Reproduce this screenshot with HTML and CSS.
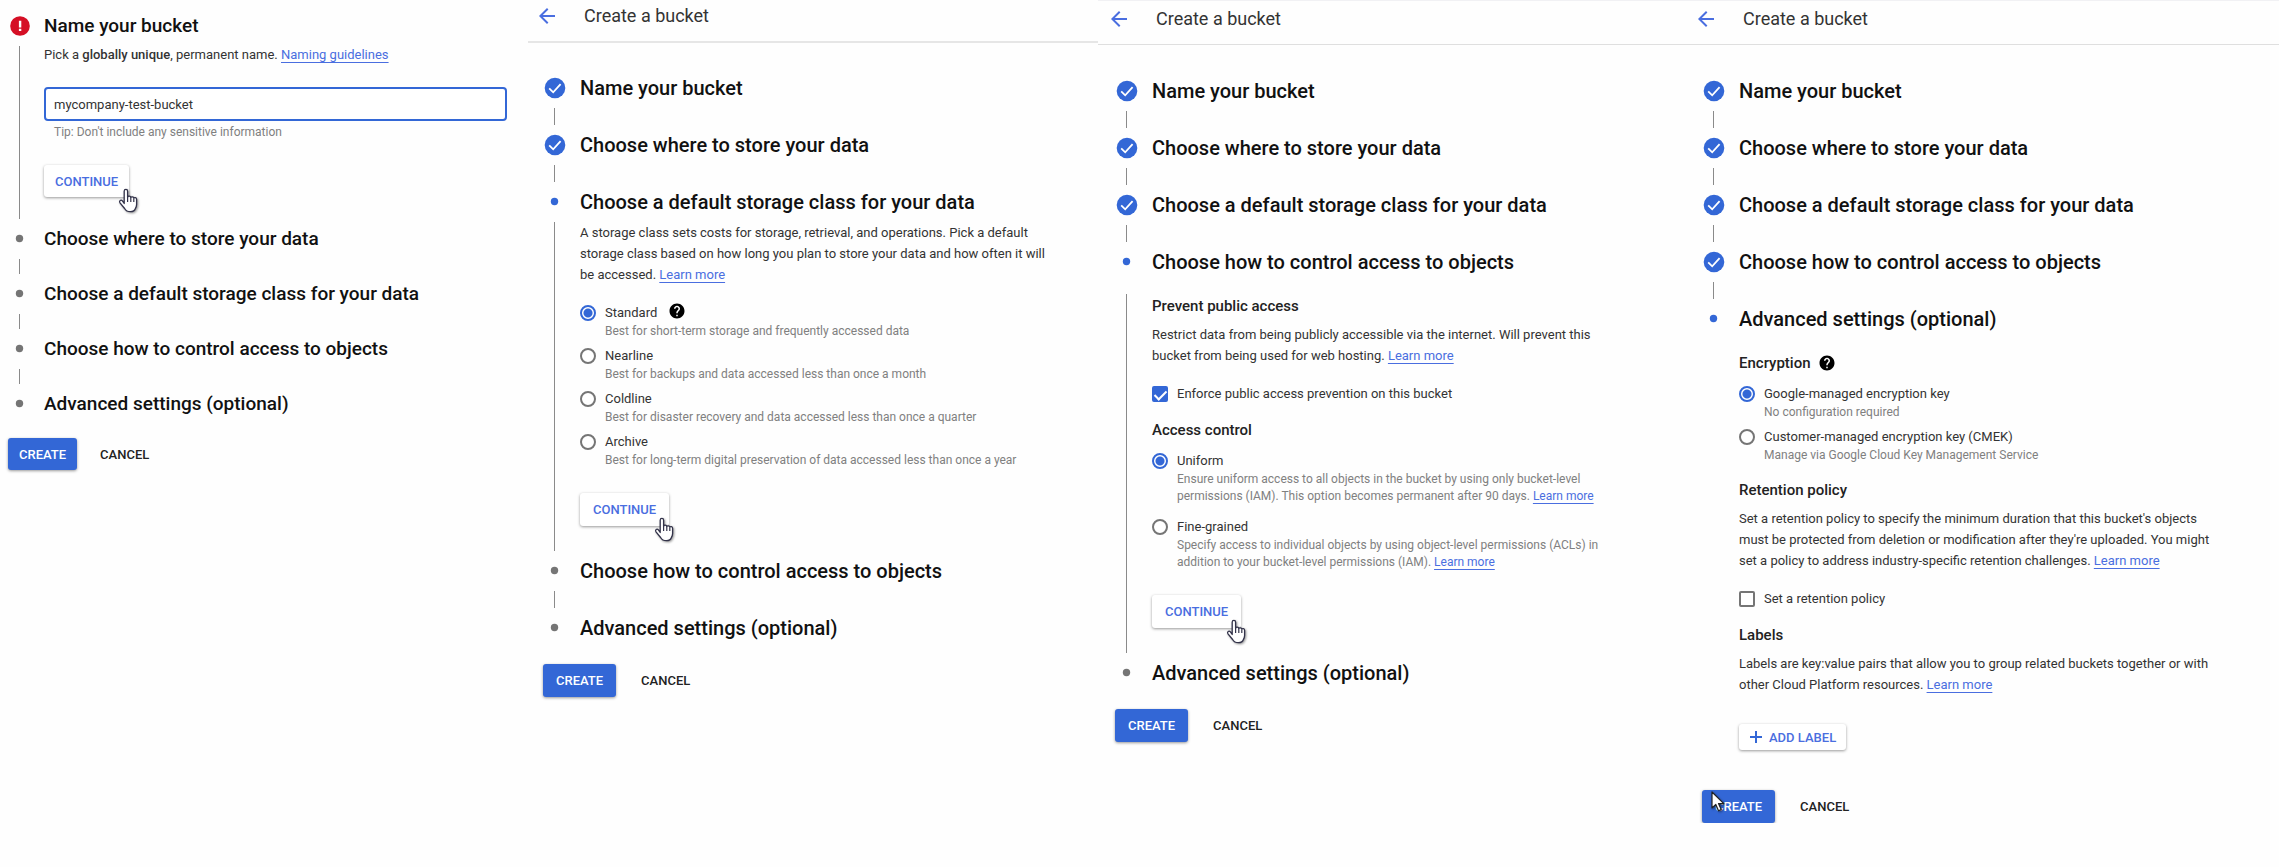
FILE: index.html
```html
<!DOCTYPE html>
<html lang="en">

<head>
    <meta charset="UTF-8">
    <title>Create a bucket</title>
    <link rel="stylesheet" href="styles.css">
</head>

<body>
    <!-- shared icons -->
    <svg class="sprite" aria-hidden="true">
        <symbol id="icon-check" viewBox="0 0 24 24">
            <circle cx="12" cy="12" r="10.3" fill="#3367d6" />
            <path d="M6.2 12.3l4 4 7.4-8.2" fill="none" stroke="#fff" stroke-width="1.8" />
        </symbol>
        <symbol id="icon-error" viewBox="0 0 24 24">
            <circle cx="12" cy="12" r="9.8" fill="#d50f25" />
            <path d="M10.9 6.8h2.4v6.6h-2.4zM10.9 14.8h2.4v2.2h-2.4z" fill="#fff" />
        </symbol>
        <symbol id="icon-dot" viewBox="0 0 24 24">
            <circle cx="11.5" cy="11.5" r="3.7" fill="currentColor" />
        </symbol>
        <symbol id="icon-back" viewBox="0 0 24 24">
            <path d="M20 11H7.83l5.59-5.59L12 4l-8 8 8 8 1.41-1.41L7.83 13H20v-2z" fill="#4a6ee0" />
        </symbol>
        <symbol id="icon-help" viewBox="0 0 24 24">
            <path d="M12 2C6.48 2 2 6.48 2 12s4.48 10 10 10 10-4.48 10-10S17.52 2 12 2zm1 17h-2v-2h2v2zm2.07-7.75l-.9.92C13.45 12.9 13 13.5 13 15h-2v-.5c0-1.1.45-2.1 1.17-2.83l1.24-1.26c.37-.36.59-.86.59-1.41 0-1.1-.9-2-2-2s-2 .9-2 2H8c0-2.21 1.79-4 4-4s4 1.79 4 4c0 .88-.36 1.68-.93 2.25z" fill="#000" />
        </symbol>
        <symbol id="icon-hand" viewBox="0 0 22 26">
            <path d="M6.2 15.5V3.2c0-2.4 3.4-2.4 3.4 0v6c.3-1.5 3-1.4 3.2.4.5-1.2 2.8-1 3 .6.6-1 2.7-.7 2.8 1v5.300c0 2-.7 3.200-1.300 4.300-.6 1.900-2.300 2.900-4.800 2.900-3 0-4.700-.9-5.900-3.200L2 14.800c-1.300-2 .9-3.600 2.400-1.900z" fill="#fff" stroke="#33334a" stroke-width="1.3" stroke-linejoin="round" />
            <path d="M9.600 9v5M12.800 9.800V14M15.800 10.500V14" fill="none" stroke="#33334a" stroke-width="1.2" />
        </symbol>
        <symbol id="icon-pointer" viewBox="0 0 14 22">
            <path d="M1 1v16l3.800-3.500 2.700 6.300 2.700-1.200-2.700-6h5.300z" fill="#fff" stroke="#222" stroke-width="1.200" stroke-linejoin="round" />
        </symbol>
    </svg>

    <main class="screens">
        <!-- 1. name -->
        <form class="screen compact">
            <ol class="stepper">
                <li class="step">
                    <div class="marker"><svg><use href="#icon-error" /></svg></div>
                    <div class="content">
                        <h2><label for="bucket-name">Name your bucket</label></h2>
                        <div class="body">
                            <p>Pick a <b>globally unique</b>, permanent name. <a href="#">Naming guidelines</a></p>
                            <input class="text-field" id="bucket-name" type="text" value="mycompany-test-bucket">
                            <small class="tip">Tip: Don't include any sensitive information</small>
                            <button class="btn raised" type="button">CONTINUE<svg class="hand"><use href="#icon-hand" /></svg></button>
                        </div>
                    </div>
                </li>
                <li class="step">
                    <div class="marker"><svg><use href="#icon-dot" /></svg></div>
                    <div class="content"><h2>Choose where to store your data</h2></div>
                </li>
                <li class="step">
                    <div class="marker"><svg><use href="#icon-dot" /></svg></div>
                    <div class="content"><h2>Choose a default storage class for your data</h2></div>
                </li>
                <li class="step">
                    <div class="marker"><svg><use href="#icon-dot" /></svg></div>
                    <div class="content"><h2>Choose how to control access to objects</h2></div>
                </li>
                <li class="step">
                    <div class="marker"><svg><use href="#icon-dot" /></svg></div>
                    <div class="content"><h2>Advanced settings (optional)</h2></div>
                </li>
            </ol>
            <div class="actions">
                <button class="btn primary" type="button">CREATE</button>
                <button class="btn flat" type="button">CANCEL</button>
            </div>
        </form>

        <!-- 2. storage class -->
        <form class="screen narrow">
            <header class="topbar">
                <a href="#" aria-label="Back"><svg><use href="#icon-back" /></svg></a>
                <h1>Create a bucket</h1>
            </header>
            <ol class="stepper">
                <li class="step">
                    <div class="marker"><svg><use href="#icon-check" /></svg></div>
                    <div class="content"><h2>Name your bucket</h2></div>
                </li>
                <li class="step">
                    <div class="marker"><svg><use href="#icon-check" /></svg></div>
                    <div class="content"><h2>Choose where to store your data</h2></div>
                </li>
                <li class="step">
                    <div class="marker active"><svg><use href="#icon-dot" /></svg></div>
                    <div class="content">
                        <h2>Choose a default storage class for your data</h2>
                        <div class="body">
                            <p>A storage class sets costs for storage, retrieval, and operations. Pick a default storage class based on how long you plan to store your data and how often it will be accessed. <a href="#">Learn more</a></p>
                            <div class="options">
                                <div class="option">
                                    <input type="radio" name="class" id="standard" checked>
                                    <label for="standard">Standard</label>
                                    <svg class="help"><use href="#icon-help" /></svg>
                                    <small>Best for short-term storage and frequently accessed data</small>
                                </div>
                                <div class="option">
                                    <input type="radio" name="class" id="nearline">
                                    <label for="nearline">Nearline</label>
                                    <small>Best for backups and data accessed less than once a month</small>
                                </div>
                                <div class="option">
                                    <input type="radio" name="class" id="coldline">
                                    <label for="coldline">Coldline</label>
                                    <small>Best for disaster recovery and data accessed less than once a quarter</small>
                                </div>
                                <div class="option">
                                    <input type="radio" name="class" id="archive">
                                    <label for="archive">Archive</label>
                                    <small>Best for long-term digital preservation of data accessed less than once a year</small>
                                </div>
                            </div>
                            <button class="btn raised" type="button">CONTINUE<svg class="hand"><use href="#icon-hand" /></svg></button>
                        </div>
                    </div>
                </li>
                <li class="step">
                    <div class="marker"><svg><use href="#icon-dot" /></svg></div>
                    <div class="content"><h2>Choose how to control access to objects</h2></div>
                </li>
                <li class="step">
                    <div class="marker"><svg><use href="#icon-dot" /></svg></div>
                    <div class="content"><h2>Advanced settings (optional)</h2></div>
                </li>
            </ol>
            <div class="actions">
                <button class="btn primary" type="button">CREATE</button>
                <button class="btn flat" type="button">CANCEL</button>
            </div>
        </form>

        <!-- 3. access control -->
        <form class="screen">
            <header class="topbar">
                <a href="#" aria-label="Back"><svg><use href="#icon-back" /></svg></a>
                <h1>Create a bucket</h1>
            </header>
            <ol class="stepper">
                <li class="step">
                    <div class="marker"><svg><use href="#icon-check" /></svg></div>
                    <div class="content"><h2>Name your bucket</h2></div>
                </li>
                <li class="step">
                    <div class="marker"><svg><use href="#icon-check" /></svg></div>
                    <div class="content"><h2>Choose where to store your data</h2></div>
                </li>
                <li class="step">
                    <div class="marker"><svg><use href="#icon-check" /></svg></div>
                    <div class="content"><h2>Choose a default storage class for your data</h2></div>
                </li>
                <li class="step sections">
                    <div class="marker active"><svg><use href="#icon-dot" /></svg></div>
                    <div class="content">
                        <h2>Choose how to control access to objects</h2>
                        <div class="body">
                            <h3>Prevent public access</h3>
                            <p>Restrict data from being publicly accessible via the internet. Will prevent this bucket from being used for web hosting. <a href="#">Learn more</a></p>
                            <div class="options">
                                <div class="option">
                                    <input type="checkbox" id="enforce" checked>
                                    <label for="enforce">Enforce public access prevention on this bucket</label>
                                </div>
                            </div>
                            <h3>Access control</h3>
                            <div class="options loose">
                                <div class="option">
                                    <input type="radio" name="access" id="uniform" checked>
                                    <label for="uniform">Uniform</label>
                                    <small>Ensure uniform access to all objects in the bucket by using only bucket-level permissions (IAM). This option becomes permanent after 90 days. <a href="#">Learn more</a></small>
                                </div>
                                <div class="option">
                                    <input type="radio" name="access" id="fine">
                                    <label for="fine">Fine-grained</label>
                                    <small>Specify access to individual objects by using object-level permissions (ACLs) in addition to your bucket-level permissions (IAM). <a href="#">Learn more</a></small>
                                </div>
                            </div>
                            <button class="btn raised" type="button">CONTINUE<svg class="hand"><use href="#icon-hand" /></svg></button>
                        </div>
                    </div>
                </li>
                <li class="step">
                    <div class="marker"><svg><use href="#icon-dot" /></svg></div>
                    <div class="content"><h2>Advanced settings (optional)</h2></div>
                </li>
            </ol>
            <div class="actions">
                <button class="btn primary" type="button">CREATE</button>
                <button class="btn flat" type="button">CANCEL</button>
            </div>
        </form>

        <!-- 4. advanced settings -->
        <form class="screen">
            <header class="topbar">
                <a href="#" aria-label="Back"><svg><use href="#icon-back" /></svg></a>
                <h1>Create a bucket</h1>
            </header>
            <ol class="stepper">
                <li class="step">
                    <div class="marker"><svg><use href="#icon-check" /></svg></div>
                    <div class="content"><h2>Name your bucket</h2></div>
                </li>
                <li class="step">
                    <div class="marker"><svg><use href="#icon-check" /></svg></div>
                    <div class="content"><h2>Choose where to store your data</h2></div>
                </li>
                <li class="step">
                    <div class="marker"><svg><use href="#icon-check" /></svg></div>
                    <div class="content"><h2>Choose a default storage class for your data</h2></div>
                </li>
                <li class="step">
                    <div class="marker"><svg><use href="#icon-check" /></svg></div>
                    <div class="content"><h2>Choose how to control access to objects</h2></div>
                </li>
                <li class="step sections">
                    <div class="marker active"><svg><use href="#icon-dot" /></svg></div>
                    <div class="content">
                        <h2>Advanced settings (optional)</h2>
                        <div class="body">
                            <h3>Encryption <svg class="help"><use href="#icon-help" /></svg></h3>
                            <div class="options">
                                <div class="option">
                                    <input type="radio" name="encryption" id="google-key" checked>
                                    <label for="google-key">Google-managed encryption key</label>
                                    <small>No configuration required</small>
                                </div>
                                <div class="option">
                                    <input type="radio" name="encryption" id="customer-key">
                                    <label for="customer-key">Customer-managed encryption key (CMEK)</label>
                                    <small>Manage via Google Cloud Key Management Service</small>
                                </div>
                            </div>
                            <h3>Retention policy</h3>
                            <p>Set a retention policy to specify the minimum duration that this bucket's objects must be protected from deletion or modification after they're uploaded. You might set a policy to address industry-specific retention challenges. <a href="#">Learn more</a></p>
                            <div class="options">
                                <div class="option">
                                    <input type="checkbox" id="retention">
                                    <label for="retention">Set a retention policy</label>
                                </div>
                            </div>
                            <h3>Labels</h3>
                            <p>Labels are key:value pairs that allow you to group related buckets together or with other Cloud Platform resources. <a href="#">Learn more</a></p>
                            <button class="btn raised add" type="button"><svg viewBox="0 0 14 14"><path d="M7 1v12M1 7h12" stroke="#3367d6" stroke-width="2" /></svg>ADD LABEL</button>
                        </div>
                    </div>
                </li>
            </ol>
            <div class="actions">
                <button class="btn primary" type="button">CREATE<svg class="pointer"><use href="#icon-pointer" /></svg></button>
                <button class="btn flat" type="button">CANCEL</button>
            </div>
        </form>
    </main>
</body>

</html>
```
FILE: styles.css
```css
* {
    box-sizing: border-box;
}

body {
    margin: 0;
    background: #fefefe;
    color: #333;
    font-family: Roboto, "Liberation Sans", sans-serif;
    font-size: 13px;
    line-height: 21px;
}

h1, h2, h3, p, ol {
    margin: 0;
    padding: 0;
}

a {
    color: #4a6ee0;
    text-underline-offset: 3px;
}

b {
    font-weight: 500;
}

.sprite {
    position: absolute;
    width: 0;
    height: 0;
}

.screens {
    display: grid;
    grid-template-columns: 528fr 570fr 587fr 594fr;
}

.screen {
    --side: 17px;
    --gap: 13px;
    --pitch: 57px;
}

.screen.narrow {
    --side: 15px;
}

.screen.compact {
    --side: 8px;
    --gap: 12px;
    --pitch: 55px;
    padding-top: 14px;
    line-height: 20px;
}

/* top bar */
.topbar {
    display: flex;
    align-items: flex-start;
    gap: 25px;
    height: 45px;
    padding: 6px 0 0 calc(var(--side) - 8px);
    border-top: 1px solid #f1f1f4;
    border-bottom: 1px solid #dfdfdf;
}

.narrow .topbar {
    height: 43px;
    padding-top: 4px;
    border-top: 0;
    border-bottom: 2px solid #e6e6e6;
}

.topbar a,
.topbar svg {
    display: block;
    width: 24px;
    height: 24px;
}

h1 {
    font-size: 18px;
    font-weight: 400;
    line-height: 24px;
}

/* steps */
.stepper {
    list-style: none;
    padding-left: var(--side);
}

.topbar + .stepper {
    margin-top: 34px;
}

.narrow .topbar + .stepper {
    margin-top: 33px;
}

.step {
    display: grid;
    grid-template-columns: 24px 1fr;
    column-gap: var(--gap);
    min-height: var(--pitch);
}

.step:last-child {
    min-height: 24px;
}

.marker {
    display: flex;
    flex-direction: column;
    align-items: center;
    color: #757575;
}

.marker.active {
    color: #3367d6;
}

.marker svg {
    flex: none;
    width: 24px;
    height: 24px;
}

/* connector down to the next step */
.step:not(:last-child) .marker::after {
    content: "";
    flex: 1;
    width: 1px;
    margin: 8px 1px 8px 0;
    background: #8a8a8a;
}

.step.sections:not(:last-child) .marker::after {
    margin-top: 20px;
}

h2 {
    color: #111;
    font-size: 20px;
    font-weight: 500;
    line-height: 24px;
}

.compact h2 {
    font-size: 19px;
}

.body {
    max-width: 476px;
    padding: 8px 0 33px;
}

.compact .body {
    max-width: none;
    padding: 7px 21px 30px 0;
}

.sections .body {
    padding-top: 20px;
}

.step:last-child .body {
    padding-bottom: 16px;
}

h3 {
    display: flex;
    align-items: center;
    gap: 7px;
    color: #222;
    font-size: 15px;
    font-weight: 500;
    line-height: 24px;
}

h3 + p {
    margin-top: 6px;
}

.options + h3 {
    margin-top: 14px;
}

.help {
    width: 18px;
    height: 18px;
}

/* text field */
.text-field {
    display: block;
    width: 100%;
    height: 34px;
    margin-top: 22px;
    padding: 0 8px;
    border: 2px solid #3367d6;
    border-radius: 4px;
    background: #fff;
    color: #333;
    font: inherit;
    outline: none;
}

small {
    color: #808080;
    font-size: 12px;
    line-height: 17px;
}

.tip {
    display: block;
    margin: 3px 0 0 10px;
}

/* radios and checkboxes */
.options {
    display: grid;
    gap: 6px;
}

.options.loose {
    gap: 12px;
}

p + .options {
    margin-top: 18px;
}

h3 + .options {
    margin-top: 9px;
}

.option {
    display: grid;
    grid-template-columns: 16px auto 1fr;
    grid-template-rows: 20px;
    column-gap: 9px;
    align-items: center;
}

.option small {
    grid-column: 2 / -1;
}

.option label {
    line-height: 20px;
}

.option .help {
    margin: -4px 0 0 2px;
}

.option input {
    appearance: none;
    width: 16px;
    height: 16px;
    margin: 0;
    border: 2px solid #757575;
    background: #fff;
}

.option input[type="radio"] {
    border-radius: 50%;
}

.option input[type="checkbox"] {
    border-radius: 2px;
}

.option input[type="radio"]:checked {
    border-color: #3367d6;
    background: radial-gradient(circle, #3367d6 4px, #fff 5px);
}

.option input[type="checkbox"]:checked {
    display: grid;
    place-items: center;
    border-color: #3367d6;
    background: #3367d6;
}

.option input[type="checkbox"]:checked::before {
    content: "";
    width: 5px;
    height: 10px;
    margin-bottom: 3px;
    border: solid #fff;
    border-width: 0 2px 2px 0;
    transform: rotate(45deg);
}

/* buttons */
.btn {
    position: relative;
    height: 33px;
    padding: 0 13px;
    border: 0;
    border-radius: 3px;
    background: none;
    font: 500 13px Roboto, "Liberation Sans", sans-serif;
}

.compact .btn {
    height: 32px;
    padding: 0 11px;
}

.raised {
    display: block;
    margin-top: 24px;
    background: #fff;
    box-shadow: 0 1px 3px rgba(0, 0, 0, .4);
    color: #4a6ee0;
}

.raised.add {
    display: flex;
    align-items: center;
    gap: 6px;
    height: 26px;
    margin-top: 29px;
    padding: 0 10px;
}

.add svg {
    width: 14px;
    height: 14px;
}

.actions {
    display: flex;
    gap: 12px;
    margin-top: 24px;
    padding-left: var(--side);
}

.compact .actions {
    margin-top: 22px;
}

.primary {
    background: #3367d6;
    box-shadow: 0 1px 3px rgba(0, 0, 0, .4);
    color: #fff;
}

.flat {
    color: #222;
}

/* mouse cursors over the buttons */
.hand,
.pointer {
    position: absolute;
    filter: drop-shadow(1px 1px 1px rgba(0, 0, 0, .4));
}

.hand {
    right: -7px;
    bottom: -17px;
    width: 22px;
    height: 26px;
}

.compact .hand {
    right: -11px;
}

.pointer {
    left: 9px;
    top: 1px;
    width: 14px;
    height: 22px;
}
```
